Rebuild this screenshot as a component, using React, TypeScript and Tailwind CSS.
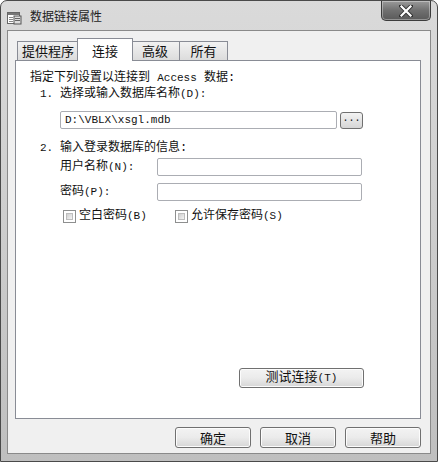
import React from "react";

const F = "font-['Liberation_Mono','Noto_Sans_CJK_SC',monospace]";
const UI = "font-['Noto_Sans_CJK_SC','Noto_Sans',sans-serif]";

function Btn({ children, className = "" }: { children: React.ReactNode; className?: string }) {
  return (
    <div
      className={`flex items-center justify-center rounded-[3px] border border-[#707070] bg-gradient-to-b from-[#f3f3f3] via-[#ebebeb] to-[#d6d6d6] shadow-[inset_0_0_0_1px_#fcfcfc] text-[13px] text-[#111] ${className}`}
    >
      {children}
    </div>
  );
}

function Check({ label }: { label: React.ReactNode }) {
  return (
    <div className="flex items-center">
      <div className="w-[13px] h-[13px] border border-[#8e8f8f] bg-white p-[2px]">
        <div className="w-full h-full bg-gradient-to-br from-[#cfcfcf] to-[#f4f4f4] border border-[#bdbdbd]" />
      </div>
      <span className="ml-[3px]">{label}</span>
    </div>
  );
}

function Tab({ label, active = false, w }: { label: string; active?: boolean; w: string }) {
  if (active)
    return (
      <div
        className={`${w} h-[23px] -mb-px -mx-[2px] relative z-10 bg-white border border-b-0 border-[#898c95] flex items-start justify-center pt-[2px] text-[13px]`}
      >
        {label}
      </div>
    );
  return (
    <div
      className={`${w} h-[19px] border border-b-0 border-[#898c95] bg-gradient-to-b from-[#f2f2f2] to-[#dcdcdc] flex items-center justify-center text-[13px] -ml-px first:ml-0`}
    >
      {label}
    </div>
  );
}

export default function App() {
  return (
    <div
      className={`${UI} w-[438px] h-[462px] flex flex-col rounded-t-[7px] border border-[#4a4a4a] bg-gradient-to-b from-[#dadada] via-[#cdcdcd] to-[#bfbfbf] text-[#111] overflow-hidden`}
    >
      {/* title bar */}
      <div className="h-[29px] flex items-start shrink-0">
        <svg className="ml-[6px] mt-[10px]" width="15" height="14" viewBox="0 0 15 14">
          <rect x="0.5" y="1.5" width="12" height="11" fill="#fff" stroke="#666" />
          <rect x="1" y="2" width="11" height="2" fill="#777" />
          <rect x="2" y="6" width="4" height="1" fill="#888" />
          <rect x="2" y="8" width="4" height="1" fill="#888" />
          <rect x="2" y="10" width="4" height="1" fill="#888" />
          <rect x="7" y="5" width="7" height="8" fill="#ddd" stroke="#555" />
          <rect x="8" y="7" width="5" height="1" fill="#666" />
          <rect x="8" y="9" width="5" height="1" fill="#666" />
        </svg>
        <span className="ml-[8px] mt-[7px] text-[12px] leading-[16px] text-[#222]">数据链接属性</span>
        <div className="ml-auto mr-[6px] w-[50px] h-[20px] rounded-b-[5px] border border-t-0 border-[#3c3c3c] bg-gradient-to-b from-[#9a9a9a] via-[#707070] to-[#5a5a5a] shadow-[inset_0_0_0_1px_rgba(255,255,255,0.35)] flex items-center justify-center">
          <svg width="14" height="12" viewBox="0 0 14 12">
            <path d="M2 1 L12 11 M12 1 L2 11" stroke="#333" strokeWidth="4" strokeLinecap="square" />
            <path d="M2.5 1.5 L11.5 10.5 M11.5 1.5 L2.5 10.5" stroke="#fff" strokeWidth="2.2" strokeLinecap="square" />
          </svg>
        </div>
      </div>

      {/* client area */}
      <div className="mx-[6px] h-[424px] shrink-0 border border-[#8a8a8a] bg-[#f0f0f0] flex flex-col pl-[7px] pr-[9px] pt-[7px]">
        {/* tabs */}
        <div className="flex items-end h-[22px] pl-[2px]">
          <Tab label="提供程序" w="w-[62px]" />
          <Tab label="连接" active w="w-[56px]" />
          <Tab label="高级" w="w-[50px]" />
          <Tab label="所有" w="w-[49px]" />
        </div>
        {/* panel */}
        <div className={`${F} h-[359px] border border-[#898c95] bg-white flex flex-col text-[12px] leading-[16px] text-[#111]`}>
          <div className="mt-[9px] ml-[14px]">
            指定下列设置以连接到 <span className="text-[11px]">Access</span> 数据:
          </div>
          <div className="ml-[24px] flex">
            <span className="w-[20px] text-[11px]">1.</span>
            <span>选择或输入数据库名称<span className="text-[11px]">(D):</span></span>
          </div>
          <div className="mt-[9px] ml-[44px] flex items-center">
            <div className="w-[277px] h-[18px] border border-[#abadb3] rounded-[2px] bg-white flex items-center pl-[4px] text-[11px]">
              D:\VBLX\xsgl.mdb
            </div>
            <div className="ml-[3px] w-[23px] h-[17px] rounded-[3px] border border-[#707070] bg-gradient-to-b from-[#f3f3f3] to-[#d6d6d6] flex items-center justify-center text-[10px] leading-none pb-[2px]">
              ...
            </div>
          </div>
          <div className="mt-[11px] ml-[24px] flex">
            <span className="w-[20px] text-[11px]">2.</span>
            <span>输入登录数据库的信息:</span>
          </div>
          <div className="mt-[2px] ml-[44px] flex items-center">
            <span className="w-[97px]">
              用户名称<span className="text-[11px]">(N):</span>
            </span>
            <div className="w-[205px] h-[18px] border border-[#abadb3] rounded-[2px] bg-white" />
          </div>
          <div className="mt-[7px] ml-[44px] flex items-center">
            <span className="w-[97px]">
              密码<span className="text-[11px]">(P):</span>
            </span>
            <div className="w-[205px] h-[18px] border border-[#abadb3] rounded-[2px] bg-white" />
          </div>
          <div className="mt-[7px] ml-[47px] flex items-center">
            <div className="w-[112px]">
              <Check label={<>空白密码<span className="text-[11px]">(B)</span></>} />
            </div>
            <Check label={<>允许保存密码<span className="text-[11px]">(S)</span></>} />
          </div>
          <div className="mt-[144px] ml-[223px]">
            <Btn className={`${F} w-[125px] h-[20px] text-[12px]`}>
              测试连接<span className="text-[11px]">(T)</span>
            </Btn>
          </div>
        </div>
        {/* bottom buttons */}
        <div className="mt-[8px] flex justify-end gap-[9px] pr-[0px]">
          <Btn className="w-[76px] h-[21px]">确定</Btn>
          <Btn className="w-[76px] h-[21px]">取消</Btn>
          <Btn className="w-[76px] h-[21px]">帮助</Btn>
        </div>
      </div>
    </div>
  );
}
